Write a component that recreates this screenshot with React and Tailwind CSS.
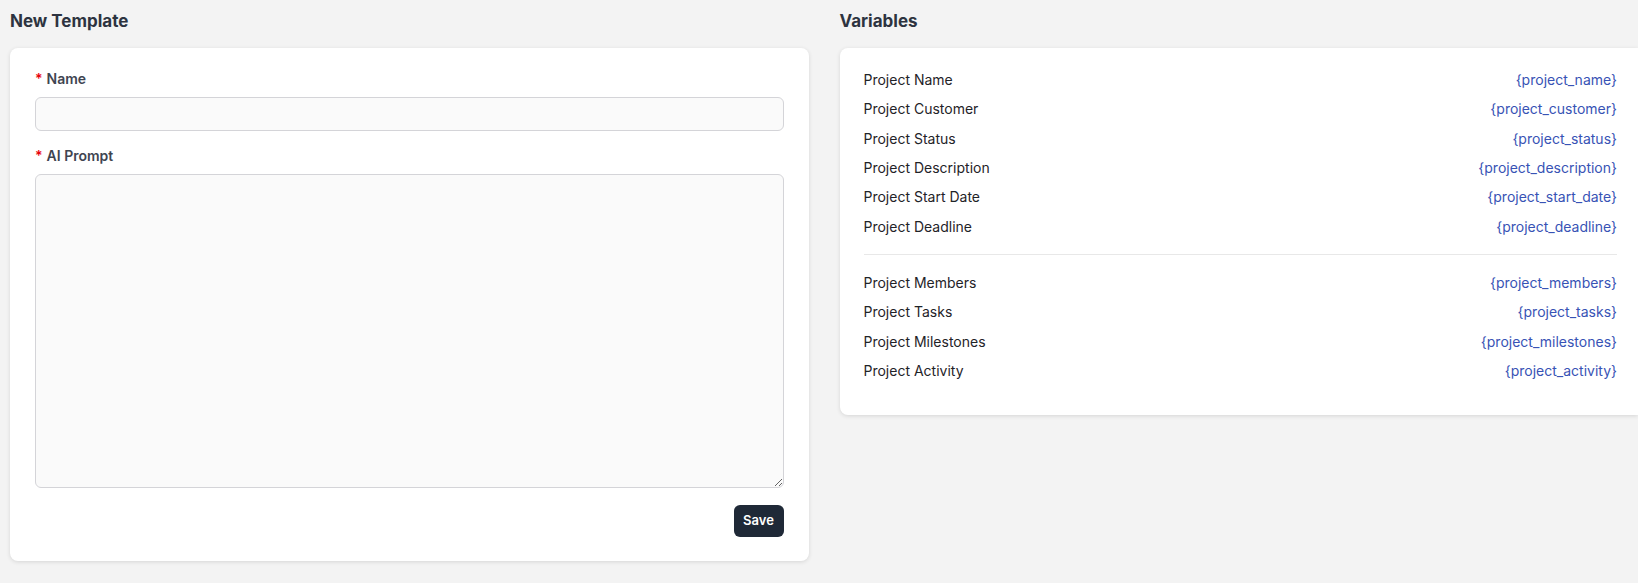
export default function App() {
  const g1 = [
    ["Project Name", "{project_name}"],
    ["Project Customer", "{project_customer}"],
    ["Project Status", "{project_status}"],
    ["Project Description", "{project_description}"],
    ["Project Start Date", "{project_start_date}"],
    ["Project Deadline", "{project_deadline}"],
  ];
  const g2 = [
    ["Project Members", "{project_members}"],
    ["Project Tasks", "{project_tasks}"],
    ["Project Milestones", "{project_milestones}"],
    ["Project Activity", "{project_activity}"],
  ];
  const Row = ([a, b]) => (
    <div key={a} className="flex justify-between items-center h-[29.3px] text-[14px]">
      <span className="text-[#1f2328]">{a}</span>
      <span className="text-[#3853b5]">{b}</span>
    </div>
  );
  return (
    <div className="min-h-[583px] bg-[#f3f3f3] pl-[10px] overflow-hidden" style={{ fontFamily: "Inter, 'Noto Sans', sans-serif" }}>
      <div className="grid grid-cols-2 gap-[31px] items-start">
        <div>
          <h2 className="text-[17px] font-bold text-[#2d3340] h-[48px] flex items-center pb-[4px]">New Template</h2>
          <div className="bg-white rounded-lg shadow-[0_1px_4px_rgba(0,0,0,0.12)] px-[25px] pt-[20px] pb-[24px]">
            <label className="block text-[14px] font-semibold text-[#3f4551] mb-[8px]"><span className="text-red-600 mr-[4px]">*</span>Name</label>
            <div className="h-[34px] rounded-md border border-[#d4d4d8] bg-[#fafafa]" />
            <label className="block text-[14px] font-semibold text-[#3f4551] mt-[14px] mb-[8px]"><span className="text-red-600 mr-[4px]">*</span>AI Prompt</label>
            <textarea className="block w-full h-[314px] rounded-md border border-[#d4d4d8] bg-[#fafafa] outline-none" />
            <div className="flex justify-end mt-[17px]">
              <button className="w-[50px] h-[32px] rounded-md bg-[#1f2937] text-white text-[13px] font-semibold">Save</button>
            </div>
          </div>
        </div>
        <div>
          <h2 className="text-[17px] font-bold text-[#2d3340] h-[48px] flex items-center pb-[4px]">Variables</h2>
          <div className="bg-white rounded-l-lg shadow-[0_1px_4px_rgba(0,0,0,0.12)] pl-[24px] pr-[21px] pt-[17px] pb-[30px]">
            {g1.map(Row)}
            <div className="border-t border-[#e8e8e8] my-[13px]" />
            {g2.map(Row)}
          </div>
        </div>
      </div>
    </div>
  );
}
